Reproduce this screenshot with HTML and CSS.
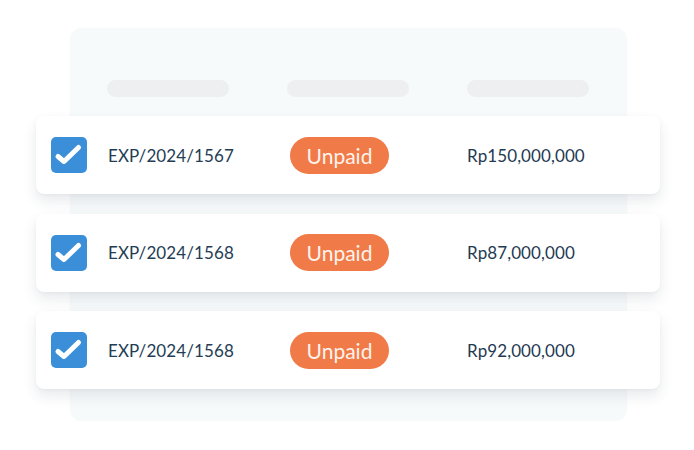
FILE: index.html
```html
<!DOCTYPE html>
<html>
<head>
<meta charset="utf-8">
<link rel="stylesheet" href="styles.css">
</head>
<body>
<div class="stage">
  <div class="panel">
    <div class="head">
      <span class="bar"></span><span class="bar"></span><span class="bar"></span>
    </div>
  </div>
  <div class="rows">
    <div class="row">
      <span class="check"><svg viewBox="0 0 36 36" width="36" height="36"><path d="M7 19.5 L13 24.5 L27.5 10.5" fill="none" stroke="#fff" stroke-width="5" stroke-linecap="round" stroke-linejoin="round"/></svg></span>
      <span class="id">EXP/2024/1567</span>
      <span class="badge">Unpaid</span>
      <span class="amt">Rp150,000,000</span>
    </div>
    <div class="row">
      <span class="check"><svg viewBox="0 0 36 36" width="36" height="36"><path d="M7 19.5 L13 24.5 L27.5 10.5" fill="none" stroke="#fff" stroke-width="5" stroke-linecap="round" stroke-linejoin="round"/></svg></span>
      <span class="id">EXP/2024/1568</span>
      <span class="badge">Unpaid</span>
      <span class="amt">Rp87,000,000</span>
    </div>
    <div class="row">
      <span class="check"><svg viewBox="0 0 36 36" width="36" height="36"><path d="M7 19.5 L13 24.5 L27.5 10.5" fill="none" stroke="#fff" stroke-width="5" stroke-linecap="round" stroke-linejoin="round"/></svg></span>
      <span class="id">EXP/2024/1568</span>
      <span class="badge">Unpaid</span>
      <span class="amt">Rp92,000,000</span>
    </div>
  </div>
</div>
</body>
</html>
```
FILE: styles.css
```css
html, body {
  margin: 0;
  padding: 0;
  background: #ffffff;
}
body {
  font-family: Lato, "Liberation Sans", sans-serif;
  width: 694px;
  height: 450px;
  overflow: hidden;
}
.stage {
  display: grid;
  width: 694px;
  height: 450px;
}
.panel, .rows {
  grid-area: 1 / 1;
}
.panel {
  margin: 28px 0 0 70px;
  width: 557px;
  height: 393px;
  background: #f7fafb;
  border-radius: 12px;
  box-shadow: 0 0 2px rgba(0, 0, 0, 0.03);
  box-sizing: border-box;
  padding: 52px 0 0 37px;
}
.head {
  display: flex;
  gap: 58px;
}
.bar {
  display: block;
  width: 122px;
  height: 17px;
  border-radius: 9px;
  background: #edeff1;
}
.rows {
  margin: 116px 0 0 36px;
  width: 624px;
  display: flex;
  flex-direction: column;
  gap: 19.5px;
  align-self: start;
}
.row {
  height: 78px;
  background: #ffffff;
  border-radius: 8px;
  box-shadow: 0 7px 14px rgba(30, 50, 70, 0.1), 0 1px 3px rgba(30, 50, 70, 0.04);
  display: flex;
  align-items: center;
  padding-left: 15px;
  box-sizing: border-box;
}
.check {
  width: 36px;
  height: 36px;
  border-radius: 5px;
  background: #3b8fd8;
  display: block;
  flex: none;
}
.check svg {
  display: block;
}
.id {
  margin-left: 21px;
  width: 182px;
  font-size: 17px;
  color: #243d55;
  letter-spacing: 0.1px;
}
.badge {
  width: 99px;
  height: 37px;
  border-radius: 19px;
  background: #f07a48;
  color: #fff3ec;
  font-size: 21px;
  display: flex;
  align-items: center;
  justify-content: center;
  flex: none;
}
.amt {
  margin-left: 78px;
  font-size: 17px;
  color: #1f3a52;
  letter-spacing: 0.1px;
}
```
